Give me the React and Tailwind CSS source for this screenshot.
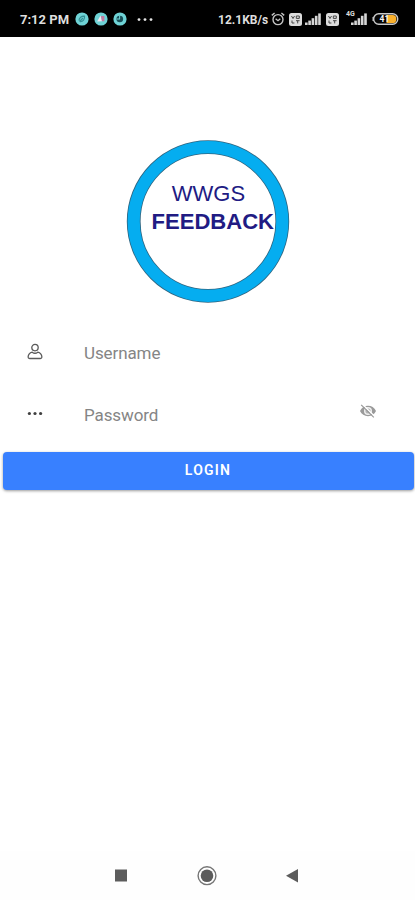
import React, { useState } from 'react';

const AppDot = ({ children }) => (
  <svg className="h-[14px] w-[14px]" viewBox="0 0 14 14" aria-hidden="true">
    <circle cx="7" cy="7" r="6.6" fill="#6fd3d6" />
    {children}
  </svg>
);

const AlarmIcon = () => (
  <svg className="h-[14px] w-[14px]" viewBox="0 0 14 14" fill="none" stroke="#c4c4c4" strokeWidth="1.4" aria-hidden="true">
    <circle cx="7" cy="7.6" r="5" />
    <path d="M0.8 3.4 3.6 1M13.2 3.4 10.4 1M4.6 6.8 7 8.7 9.3 6.8" />
  </svg>
);

const VolteIcon = () => (
  <svg className="h-[13px] w-[13px]" viewBox="0 0 13 13" aria-hidden="true">
    <rect width="13" height="13" rx="2.5" fill="#dcdcdc" />
    <path d="M2.5 3 4 5.5 5.5 3M7.3 3h3v2.4h-3zM3 7.5V10h2.4M7 7.7h3.6M8.7 7.7V10.4" fill="none" stroke="#444" strokeWidth="1" />
  </svg>
);

const SignalIcon = () => (
  <svg className="h-[12px] w-[16px]" viewBox="0 0 16 12" fill="#d6d6d6" aria-hidden="true">
    <rect x="0" y="9.5" width="2.6" height="2.5" />
    <rect x="3.3" y="7.6" width="2.6" height="4.4" />
    <rect x="6.6" y="5.2" width="2.6" height="6.8" />
    <rect x="9.9" y="2.8" width="2.6" height="9.2" />
    <rect x="13.2" y="0.4" width="2.6" height="11.6" />
  </svg>
);

const BatteryIcon = () => (
  <svg className="h-[12px] w-[27px]" viewBox="0 0 27 12" aria-hidden="true">
    <rect x="1.7" y="0.7" width="24" height="10.6" rx="5" fill="#050505" stroke="#c9c9c9" strokeWidth="1.4" />
    <path d="M14.5 2h6.2a3.6 3.6 0 0 1 3.6 3.6v.8a3.6 3.6 0 0 1-3.6 3.6h-6.2z" fill="#fbb12c" />
    <path d="M1.2 4v4" stroke="#c9c9c9" strokeWidth="1.4" />
    <text x="7.5" y="9" fill="#f5f5f5" fontFamily="Roboto, sans-serif" fontSize="8.5" fontWeight="700">41</text>
  </svg>
);

const StatusBar = () => (
  <header className="flex h-[37px] items-center bg-black pt-[2px] pr-[16px] pl-[20px] text-[#dedede]">
    <span className="w-[50px] text-[13px] font-bold whitespace-nowrap">7:12 PM</span>
    <div className="-mt-px ml-[5px] flex gap-[5px]">
      <AppDot>
        <path d="M4 8.5C4 5.5 6.5 4 9.5 4.2 10 7.2 8 10 5 9.7M4.5 9.5 8 6" fill="none" stroke="#348f94" strokeWidth="1.2" />
      </AppDot>
      <AppDot>
        <path d="M3.2 9.5 6.5 3.6l1.5 5.6z" fill="#f3e9f2" />
        <path d="M7 4h3.4v5.2H8z" fill="#c3799f" />
      </AppDot>
      <AppDot>
        <circle cx="6.8" cy="7" r="3.3" fill="#184e57" />
        <path d="M6.6 3.5v3.5M4 7h3" stroke="#6fd3d6" strokeWidth="1" />
      </AppDot>
    </div>
    <svg className="ml-[10px] h-[4px] w-[16px]" viewBox="0 0 16 4" fill="#e5e5e5" aria-hidden="true">
      <circle cx="2" cy="1.6" r="1.4" />
      <circle cx="8" cy="1.6" r="1.4" />
      <circle cx="14" cy="1.6" r="1.4" />
    </svg>
    <div className="ml-auto flex items-center">
      <span className="w-[52px] text-[12px] font-bold whitespace-nowrap">12.1KB/s</span>
      <span className="-mt-px ml-px"><AlarmIcon /></span>
      <span className="-mt-px ml-[4px]"><VolteIcon /></span>
      <span className="-mt-px ml-[3px]"><SignalIcon /></span>
      <span className="-mt-px ml-[5px]"><VolteIcon /></span>
      <span className="relative -mt-px ml-[12px]">
        <span className="absolute -top-[2px] -left-[5px] text-[7px] leading-none font-bold">4G</span>
        <SignalIcon />
      </span>
      <span className="-mt-px ml-[5px]"><BatteryIcon /></span>
    </div>
  </header>
);

const Logo = () => (
  <svg className="h-[164px] w-[164px]" viewBox="0 0 164 164" role="img" aria-label="WWGS Feedback">
    <circle cx="82" cy="82.5" r="74.3" fill="#fff" stroke="#2f6580" strokeWidth="13.8" />
    <circle cx="82" cy="82.5" r="74.3" fill="none" stroke="#05adf0" strokeWidth="12.2" />
    <g fill="#211b83" fontFamily="Liberation Sans, Arial, sans-serif" fontSize="22">
      <text x="45.8" y="61.5" textLength="73.3" lengthAdjust="spacingAndGlyphs">WWGS</text>
      <text x="25.5" y="90" fontWeight="700" textLength="122.5" lengthAdjust="spacingAndGlyphs">FEEDBACK</text>
    </g>
  </svg>
);

const UserIcon = () => (
  <svg className="h-[18px] w-[16px]" viewBox="0 0 16 18" fill="none" stroke="#5a5a5a" strokeWidth="1.3" aria-hidden="true">
    <circle cx="8" cy="4.6" r="3.2" />
    <path d="M5.2 9.2C2.8 9.8 1.3 11.4 1.1 14c0 .9.6 1.5 1.5 1.5h10.8c.9 0 1.5-.6 1.5-1.5-.2-2.6-1.7-4.2-4.1-4.8C9.2 10.4 6.8 10.4 5.2 9.2z" />
  </svg>
);

const DotsIcon = () => (
  <svg className="h-[18px] w-[16px]" viewBox="0 0 16 18" fill="#404040" aria-hidden="true">
    <circle cx="2.4" cy="8.5" r="1.6" />
    <circle cx="8" cy="8.5" r="1.6" />
    <circle cx="13.6" cy="8.5" r="1.6" />
  </svg>
);

const EyeOffIcon = () => (
  <svg className="h-[16px] w-[18px]" viewBox="0 0 18 16" aria-hidden="true">
    <path d="M1 8C2.6 4.6 5.5 2.8 9 2.8S15.4 4.6 17 8c-1.6 3.4-4.5 5.2-8 5.2S2.6 11.4 1 8z" fill="#9a9a9a" />
    <circle cx="9" cy="8" r="4" fill="#f0f0f0" />
    <circle cx="9" cy="8" r="2.6" fill="#b5b5b5" />
    <path d="M3.4 1.2 15.8 13.6" stroke="#fff" strokeWidth="1.4" />
    <path d="M2.2 1.8 14.8 14.4" stroke="#989898" strokeWidth="1.2" />
  </svg>
);

const inputClass = 'min-w-0 flex-1 bg-transparent pt-px text-[17px] leading-6 tracking-[-0.1px] text-[#444] outline-none placeholder:text-[#858585]';

const LoginForm = () => {
  const [username, setUsername] = useState('');
  const [password, setPassword] = useState('');
  const [showPassword, setShowPassword] = useState(false);

  return (
    <form className="mt-[18px]" onSubmit={(e) => e.preventDefault()}>
      <div className="flex h-[62px] items-center pr-[38px] pl-[27px]">
        <span className="mr-[41px]"><UserIcon /></span>
        <input className={inputClass} aria-label="Username" placeholder="Username" value={username} onChange={(e) => setUsername(e.target.value)} />
      </div>
      <div className="flex h-[62px] items-center pr-[38px] pl-[27px]">
        <span className="mr-[41px]"><DotsIcon /></span>
        <input className={inputClass} type={showPassword ? 'text' : 'password'} aria-label="Password" placeholder="Password" value={password} onChange={(e) => setPassword(e.target.value)} />
        <button type="button" className="mb-[6px]" aria-label="Toggle password" onClick={() => setShowPassword(!showPassword)}>
          <EyeOffIcon />
        </button>
      </div>
      <div className="pt-[7px] pr-px pl-[3px]">
        <button type="submit" className="h-[38px] w-full rounded-[4px] bg-[#3880ff] pr-px pb-[2px] text-[14px] font-semibold tracking-[1.2px] text-white shadow-[0_1px_3px_rgba(0,0,0,0.4)]">
          LOGIN
        </button>
      </div>
    </form>
  );
};

const NavBar = () => (
  <nav className="mt-auto flex h-[49px] items-center justify-center bg-[#fefefe]">
    <svg className="mr-[68px] h-[20px] w-[20px]" viewBox="0 0 20 20" aria-hidden="true">
      <rect x="6" y="3.5" width="12" height="12" fill="#5c5c5c" />
    </svg>
    <svg className="mr-[69px] h-[20px] w-[20px]" viewBox="0 0 20 20" aria-hidden="true">
      <circle cx="10" cy="9.7" r="8.9" fill="none" stroke="#757575" strokeWidth="1.4" />
      <circle cx="10" cy="9.7" r="6.3" fill="#5c5c5c" />
    </svg>
    <svg className="h-[20px] w-[20px]" viewBox="0 0 20 20" aria-hidden="true">
      <path d="M0 9.7 12 3v13.4z" fill="#5c5c5c" />
    </svg>
  </nav>
);

const App = () => (
  <div className="flex h-screen flex-col bg-white font-[Roboto,sans-serif]">
    <StatusBar />
    <main>
      <div className="flex justify-center pt-[102px] pl-px">
        <Logo />
      </div>
      <LoginForm />
    </main>
    <NavBar />
  </div>
);

export default App;
